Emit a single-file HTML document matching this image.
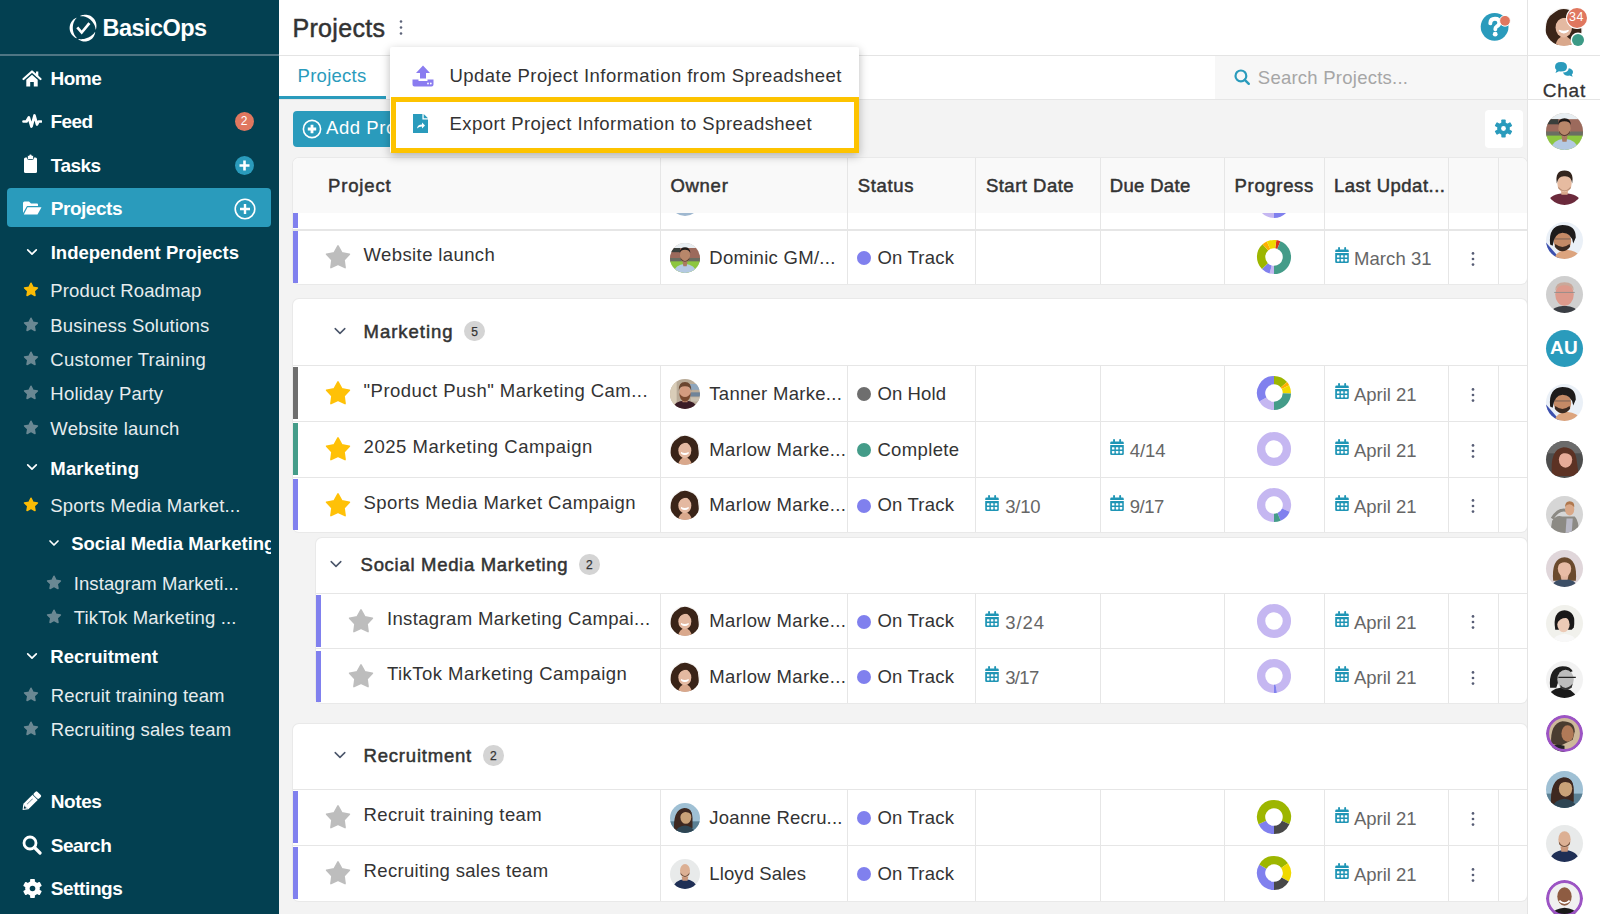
<!DOCTYPE html>
<html><head><meta charset="utf-8"><style>
html,body{margin:0;padding:0}
body{width:1600px;height:914px;overflow:hidden;position:relative;background:#f3f3f3;font-family:'Liberation Sans', sans-serif}
.t{position:absolute;white-space:nowrap;line-height:1}
svg{display:block}
</style></head><body>
<div style="position:absolute;left:0px;top:0px;width:279px;height:914px;background:#034051"></div><div style="position:absolute;left:0px;top:54px;width:279px;height:2px;background:#4f7684"></div><svg style="position:absolute;left:64px;top:8px" width="40" height="40" viewBox="0 0 40 40"><polygon points="16.27,7.85 17.23,7.44 18.23,7.12 19.27,6.88 20.34,6.74 21.43,6.70 22.53,6.76 23.63,6.94 24.71,7.22 25.76,7.61 26.77,8.11 27.73,8.71 28.62,9.41 29.43,10.19 30.16,11.06 30.80,11.99 31.33,12.98 31.76,14.01 32.09,15.07 32.30,16.15 32.42,17.23 32.42,18.31 32.33,19.38 32.15,20.42 31.88,21.42 31.53,21.38 31.43,20.39 31.25,19.42 30.99,18.49 30.68,17.59 30.30,16.73 29.88,15.92 29.41,15.14 28.90,14.40 28.35,13.70 27.77,13.04 27.16,12.41 26.52,11.82 25.85,11.27 25.14,10.75 24.41,10.27 23.64,9.83 22.84,9.42 22.00,9.07 21.13,8.76 20.23,8.51 19.30,8.32 18.34,8.20 17.36,8.15 16.36,8.19" fill="#fff"/><polygon points="31.22,24.17 31.07,25.04 30.85,25.91 30.56,26.78 30.19,27.62 29.75,28.44 29.24,29.22 28.66,29.96 28.00,30.65 27.29,31.28 26.51,31.85 25.69,32.33 24.82,32.74 23.92,33.07 22.99,33.31 22.04,33.46 21.09,33.52 20.14,33.49 19.21,33.38 18.29,33.19 17.40,32.92 16.54,32.58 15.73,32.18 14.95,31.72 14.23,31.21 14.38,30.89 15.21,31.04 16.05,31.14 16.87,31.18 17.68,31.17 18.48,31.11 19.26,31.01 20.02,30.88 20.76,30.72 21.49,30.52 22.21,30.30 22.91,30.06 23.59,29.79 24.27,29.49 24.94,29.17 25.60,28.82 26.25,28.44 26.90,28.03 27.53,27.59 28.15,27.10 28.75,26.58 29.33,26.01 29.89,25.40 30.41,24.75 30.89,24.05" fill="#fff"/><polygon points="12.71,30.36 11.76,29.92 10.85,29.39 9.98,28.78 9.16,28.08 8.40,27.30 7.71,26.44 7.10,25.51 6.59,24.51 6.18,23.47 5.87,22.38 5.68,21.27 5.60,20.14 5.64,19.01 5.79,17.89 6.06,16.80 6.44,15.74 6.92,14.73 7.49,13.78 8.14,12.90 8.88,12.09 9.67,11.36 10.52,10.71 11.42,10.15 12.34,9.68 12.55,9.97 11.88,10.71 11.28,11.49 10.76,12.30 10.31,13.14 9.92,13.99 9.59,14.85 9.33,15.72 9.12,16.59 8.97,17.47 8.86,18.34 8.81,19.21 8.80,20.09 8.84,20.96 8.93,21.83 9.06,22.70 9.24,23.57 9.48,24.43 9.78,25.29 10.13,26.14 10.55,26.98 11.03,27.80 11.58,28.59 12.20,29.35 12.90,30.07" fill="#fff"/><polyline points="13.3,19.3 17.7,24.5 25.4,15.1" fill="none" stroke="#fff" stroke-width="2.7" stroke-linecap="butt" stroke-linejoin="miter"/></svg><div class="t" style="left:102.60px;top:16.51px;font-size:23.5px;font-weight:700;color:#fff;letter-spacing:-0.572px;">BasicOps</div><svg style="position:absolute;left:22px;top:68.5px" width="20" height="19" viewBox="0 0 20 19"><path d="M1.5 10 L10 2.5 L18.5 10" fill="none" stroke="#fff" stroke-width="2.2" stroke-linecap="round" stroke-linejoin="round"/><rect x="14" y="2.5" width="2.3" height="5" fill="#fff"/><path d="M4.3 10.8 L10 5.8 L15.7 10.8 V17.5 H11.8 V13 H8.2 V17.5 H4.3 Z" fill="#fff"/></svg><div class="t" style="left:50.50px;top:69.22px;font-size:19px;font-weight:700;color:#fff;letter-spacing:-0.494px;">Home</div><svg style="position:absolute;left:22px;top:112px" width="20" height="18" viewBox="0 0 20 18"><polyline points="1.5,9.5 4.5,9.5 6.8,5.5 9.5,14.5 12.5,3.5 15,12.5 16.5,9.5 19,9.5" fill="none" stroke="#fff" stroke-width="2.7" stroke-linejoin="round" stroke-linecap="round"/></svg><div class="t" style="left:50.50px;top:112.42px;font-size:19px;font-weight:700;color:#fff;letter-spacing:-0.615px;">Feed</div><div style="position:absolute;left:234.5px;top:111.5px;width:19px;height:19px;background:#e0775f;border-radius:50%"></div><div class="t" style="left:234.5px;top:114px;width:19px;text-align:center;font-size:12px;color:#fff;line-height:14px">2</div><svg style="position:absolute;left:22px;top:154px" width="18" height="20" viewBox="0 0 18 20"><rect x="2" y="3.5" width="13" height="15.5" rx="1.5" fill="#fff"/><rect x="5.5" y="1.5" width="6" height="4" rx="1" fill="#fff" stroke="#033f52" stroke-width="0.8"/><circle cx="8.5" cy="1.8" r="1.2" fill="#fff"/></svg><div class="t" style="left:50.75px;top:156.02px;font-size:19px;font-weight:700;color:#fff;letter-spacing:-0.515px;">Tasks</div><div style="position:absolute;left:235px;top:156px;width:19px;height:19px;background:#2a9bbc;border-radius:50%"></div><svg style="position:absolute;left:235px;top:156px" width="19" height="19" viewBox="0 0 19 19"><path d="M9.5 4.5 V14.5 M4.5 9.5 H14.5" stroke="#fff" stroke-width="2.6"/></svg><div style="position:absolute;left:7px;top:188px;width:264px;height:39px;background:#2a9bbc;border-radius:4px"></div><svg style="position:absolute;left:22px;top:200px" width="20" height="16" viewBox="0 0 20 16"><path d="M1 3 Q1 1.5 2.5 1.5 H7 L9 3.5 H15 Q16 3.5 16 4.5 V6 H5 L1 13 Z" fill="#fff"/><path d="M5.5 7.2 H19.5 L15.5 14.5 H1.8 Z" fill="#fff"/></svg><div class="t" style="left:50.75px;top:199.42px;font-size:19px;font-weight:700;color:#fff;letter-spacing:-0.461px;">Projects</div><svg style="position:absolute;left:234px;top:198px" width="22" height="22" viewBox="0 0 22 22"><circle cx="11" cy="11" r="9.8" fill="none" stroke="#fff" stroke-width="1.6"/><path d="M11 6 V16 M6 11 H16" stroke="#fff" stroke-width="2.4"/></svg><svg style="position:absolute;left:24.5px;top:244.5px" width="14" height="14" viewBox="0 0 14 14"><polyline points="2.7,4.85 7,9.15 11.3,4.85" fill="none" stroke="#fff" stroke-width="1.7" stroke-linecap="round" stroke-linejoin="round"/></svg><div class="t" style="left:50.70px;top:243.64px;font-size:18.5px;font-weight:700;color:#fff;letter-spacing:0.009px;">Independent Projects</div><svg style="position:absolute;left:22.3px;top:281.09999999999997px" width="18" height="18" viewBox="0 0 18 18"><polygon points="9.00,2.30 10.97,6.29 15.37,6.93 12.19,10.04 12.94,14.42 9.00,12.35 5.06,14.42 5.81,10.04 2.63,6.93 7.03,6.29" fill="#fbbc05" stroke="#fbbc05" stroke-width="1.6" stroke-linejoin="round"/></svg><div class="t" style="left:50.30px;top:282.34px;font-size:18.5px;font-weight:400;color:#e6ecee;letter-spacing:0.135px;">Product Roadmap</div><svg style="position:absolute;left:22.3px;top:315.5px" width="18" height="18" viewBox="0 0 18 18"><polygon points="9.00,2.30 10.97,6.29 15.37,6.93 12.19,10.04 12.94,14.42 9.00,12.35 5.06,14.42 5.81,10.04 2.63,6.93 7.03,6.29" fill="#6a8893" stroke="#6a8893" stroke-width="1.6" stroke-linejoin="round"/></svg><div class="t" style="left:50.30px;top:316.74px;font-size:18.5px;font-weight:400;color:#e6ecee;letter-spacing:0.158px;">Business Solutions</div><svg style="position:absolute;left:22.3px;top:350.2px" width="18" height="18" viewBox="0 0 18 18"><polygon points="9.00,2.30 10.97,6.29 15.37,6.93 12.19,10.04 12.94,14.42 9.00,12.35 5.06,14.42 5.81,10.04 2.63,6.93 7.03,6.29" fill="#6a8893" stroke="#6a8893" stroke-width="1.6" stroke-linejoin="round"/></svg><div class="t" style="left:50.30px;top:351.44px;font-size:18.5px;font-weight:400;color:#e6ecee;letter-spacing:0.272px;">Customer Training</div><svg style="position:absolute;left:22.3px;top:384.2px" width="18" height="18" viewBox="0 0 18 18"><polygon points="9.00,2.30 10.97,6.29 15.37,6.93 12.19,10.04 12.94,14.42 9.00,12.35 5.06,14.42 5.81,10.04 2.63,6.93 7.03,6.29" fill="#6a8893" stroke="#6a8893" stroke-width="1.6" stroke-linejoin="round"/></svg><div class="t" style="left:50.30px;top:385.44px;font-size:18.5px;font-weight:400;color:#e6ecee;letter-spacing:0.223px;">Holiday Party</div><svg style="position:absolute;left:22.3px;top:418.7px" width="18" height="18" viewBox="0 0 18 18"><polygon points="9.00,2.30 10.97,6.29 15.37,6.93 12.19,10.04 12.94,14.42 9.00,12.35 5.06,14.42 5.81,10.04 2.63,6.93 7.03,6.29" fill="#6a8893" stroke="#6a8893" stroke-width="1.6" stroke-linejoin="round"/></svg><div class="t" style="left:50.30px;top:419.94px;font-size:18.5px;font-weight:400;color:#e6ecee;letter-spacing:0.227px;">Website launch</div><svg style="position:absolute;left:24.5px;top:460.4px" width="14" height="14" viewBox="0 0 14 14"><polyline points="2.7,4.85 7,9.15 11.3,4.85" fill="none" stroke="#fff" stroke-width="1.7" stroke-linecap="round" stroke-linejoin="round"/></svg><div class="t" style="left:50.30px;top:459.54px;font-size:18.5px;font-weight:700;color:#fff;letter-spacing:0.178px;">Marketing</div><svg style="position:absolute;left:22.3px;top:496.0px" width="18" height="18" viewBox="0 0 18 18"><polygon points="9.00,2.30 10.97,6.29 15.37,6.93 12.19,10.04 12.94,14.42 9.00,12.35 5.06,14.42 5.81,10.04 2.63,6.93 7.03,6.29" fill="#fbbc05" stroke="#fbbc05" stroke-width="1.6" stroke-linejoin="round"/></svg><div class="t" style="left:50.30px;top:497.24px;font-size:18.5px;font-weight:400;color:#e6ecee;letter-spacing:0.186px;">Sports Media Market...</div><div style="position:absolute;left:0;top:530px;width:271px;height:30px;overflow:hidden"><svg style="position:absolute;left:47px;top:5.600000000000023px" width="14" height="14" viewBox="0 0 14 14"><polyline points="3.0,5.0 7,9.0 11.0,5.0" fill="none" stroke="#fff" stroke-width="1.7" stroke-linecap="round" stroke-linejoin="round"/></svg><div class="t" style="left:71.2px;top:4.94px;font-size:18.5px;font-weight:700;color:#fff;letter-spacing:-0.02px">Social Media Marketing</div></div><svg style="position:absolute;left:45.2px;top:574.0px" width="18" height="18" viewBox="0 0 18 18"><polygon points="9.00,2.30 10.97,6.29 15.37,6.93 12.19,10.04 12.94,14.42 9.00,12.35 5.06,14.42 5.81,10.04 2.63,6.93 7.03,6.29" fill="#6a8893" stroke="#6a8893" stroke-width="1.6" stroke-linejoin="round"/></svg><div class="t" style="left:73.70px;top:575.24px;font-size:18.5px;font-weight:400;color:#e6ecee;letter-spacing:0.097px;">Instagram Marketi...</div><svg style="position:absolute;left:45.2px;top:608.0px" width="18" height="18" viewBox="0 0 18 18"><polygon points="9.00,2.30 10.97,6.29 15.37,6.93 12.19,10.04 12.94,14.42 9.00,12.35 5.06,14.42 5.81,10.04 2.63,6.93 7.03,6.29" fill="#6a8893" stroke="#6a8893" stroke-width="1.6" stroke-linejoin="round"/></svg><div class="t" style="left:73.70px;top:609.24px;font-size:18.5px;font-weight:400;color:#e6ecee;letter-spacing:0.164px;">TikTok Marketing ...</div><svg style="position:absolute;left:24.5px;top:649.1px" width="14" height="14" viewBox="0 0 14 14"><polyline points="2.7,4.85 7,9.15 11.3,4.85" fill="none" stroke="#fff" stroke-width="1.7" stroke-linecap="round" stroke-linejoin="round"/></svg><div class="t" style="left:50.30px;top:648.24px;font-size:18.5px;font-weight:700;color:#fff;letter-spacing:-0.025px;">Recruitment</div><svg style="position:absolute;left:22.3px;top:686.1999999999999px" width="18" height="18" viewBox="0 0 18 18"><polygon points="9.00,2.30 10.97,6.29 15.37,6.93 12.19,10.04 12.94,14.42 9.00,12.35 5.06,14.42 5.81,10.04 2.63,6.93 7.03,6.29" fill="#6a8893" stroke="#6a8893" stroke-width="1.6" stroke-linejoin="round"/></svg><div class="t" style="left:50.70px;top:687.44px;font-size:18.5px;font-weight:400;color:#e6ecee;letter-spacing:0.156px;">Recruit training team</div><svg style="position:absolute;left:22.3px;top:720.1999999999999px" width="18" height="18" viewBox="0 0 18 18"><polygon points="9.00,2.30 10.97,6.29 15.37,6.93 12.19,10.04 12.94,14.42 9.00,12.35 5.06,14.42 5.81,10.04 2.63,6.93 7.03,6.29" fill="#6a8893" stroke="#6a8893" stroke-width="1.6" stroke-linejoin="round"/></svg><div class="t" style="left:50.70px;top:721.44px;font-size:18.5px;font-weight:400;color:#e6ecee;letter-spacing:0.126px;">Recruiting sales team</div><svg style="position:absolute;left:18px;top:788px" width="30" height="30" viewBox="0 0 30 30"><g transform="translate(4.6,21.9) rotate(-45)"><polygon points="0,0 4.6,-3.7 4.6,3.7" fill="#fff"/><polygon points="1.6,0 3.9,-1.7 3.9,1.7" fill="#033040"/><rect x="4.5" y="-3.7" width="13.2" height="7.4" fill="#fff"/><rect x="7" y="-1.2" width="8" height="0.7" fill="#6a8893"/><rect x="17.7" y="-3.7" width="0.8" height="7.4" fill="#4a7080"/><rect x="18.4" y="-3.7" width="4.9" height="7.4" rx="1.3" fill="#fff"/></g></svg><div class="t" style="left:50.70px;top:791.72px;font-size:19px;font-weight:700;color:#fff;letter-spacing:-0.395px;">Notes</div><svg style="position:absolute;left:22px;top:835px" width="20" height="20" viewBox="0 0 20 20"><circle cx="8" cy="8" r="6" fill="none" stroke="#fff" stroke-width="2.8"/><path d="M12.5 12.5 L18 18" stroke="#fff" stroke-width="3.2" stroke-linecap="round"/></svg><div class="t" style="left:50.70px;top:835.52px;font-size:19px;font-weight:700;color:#fff;letter-spacing:-0.453px;">Search</div><svg style="position:absolute;left:22px;top:878px" width="21" height="21" viewBox="0 0 21 21"><circle cx="10.5" cy="10.5" r="7.3" fill="#fff"/><rect x="8.1" y="1.0" width="4.8" height="4.2" rx="0.8" fill="#fff" transform="rotate(0.0 10.5 10.5)"/><rect x="8.1" y="1.0" width="4.8" height="4.2" rx="0.8" fill="#fff" transform="rotate(60.0 10.5 10.5)"/><rect x="8.1" y="1.0" width="4.8" height="4.2" rx="0.8" fill="#fff" transform="rotate(120.0 10.5 10.5)"/><rect x="8.1" y="1.0" width="4.8" height="4.2" rx="0.8" fill="#fff" transform="rotate(180.0 10.5 10.5)"/><rect x="8.1" y="1.0" width="4.8" height="4.2" rx="0.8" fill="#fff" transform="rotate(240.0 10.5 10.5)"/><rect x="8.1" y="1.0" width="4.8" height="4.2" rx="0.8" fill="#fff" transform="rotate(300.0 10.5 10.5)"/><circle cx="10.5" cy="10.5" r="2.8" fill="#034051"/></svg><div class="t" style="left:50.70px;top:879.02px;font-size:19px;font-weight:700;color:#fff;letter-spacing:-0.394px;">Settings</div><div style="position:absolute;left:279px;top:0px;width:1248px;height:55px;background:#fff"></div><div style="position:absolute;left:279px;top:55px;width:1248px;height:1px;background:#e4e4e4"></div><div class="t" style="left:292.40px;top:15.54px;font-size:25px;font-weight:400;color:#333;letter-spacing:0.329px;-webkit-text-stroke:0.5px #333;">Projects</div><svg style="position:absolute;left:397px;top:19px" width="8" height="17" viewBox="0 0 8 17"><circle cx="4" cy="2.5" r="1.3" fill="#5d6379"/><circle cx="4" cy="8.5" r="1.3" fill="#5d6379"/><circle cx="4" cy="14.5" r="1.3" fill="#5d6379"/></svg><svg style="position:absolute;left:1479px;top:11px" width="32" height="32" viewBox="0 0 32 32"><circle cx="15.6" cy="15.8" r="13.9" fill="#2a9bbc"/><path d="M11.3 12.3 Q11.5 7.8 16 7.8 Q20.3 7.8 20.3 11.8 Q20.3 14.3 17.6 15.6 Q16.3 16.3 16.3 18.3" fill="none" stroke="#fff" stroke-width="3.9" stroke-linecap="round"/><circle cx="16.2" cy="23.2" r="2.4" fill="#fff"/><circle cx="26" cy="9.8" r="5.4" fill="#e0775f" stroke="#fff" stroke-width="1"/></svg><div style="position:absolute;left:279px;top:56px;width:1248px;height:44px;background:#fff"></div><div style="position:absolute;left:279px;top:99px;width:1248px;height:1.5px;background:#e6e6e6"></div><div class="t" style="left:297.60px;top:66.84px;font-size:18.5px;font-weight:400;color:#2a9bbc;letter-spacing:0.254px;">Projects</div><div style="position:absolute;left:279px;top:96px;width:107px;height:3px;background:#2a9bbc"></div><div style="position:absolute;left:1215px;top:56px;width:312px;height:43px;background:#f7f7f7"></div><svg style="position:absolute;left:1233px;top:68px" width="20" height="20" viewBox="0 0 20 20"><circle cx="7.9" cy="7.9" r="5.4" fill="none" stroke="#2a9bbc" stroke-width="2.2"/><path d="M11.8 11.8 L15.8 15.8" stroke="#2a9bbc" stroke-width="2.4" stroke-linecap="round"/></svg><div class="t" style="left:1257.80px;top:68.94px;font-size:18.5px;font-weight:400;color:#a6a6a6;letter-spacing:0.247px;">Search Projects...</div><div style="position:absolute;left:279px;top:100px;width:1248px;height:814px;background:#f3f3f3"></div><div style="position:absolute;left:292.5px;top:110.5px;width:110px;height:36px;background:#2a9bbc;border-radius:4px"></div><svg style="position:absolute;left:301px;top:118px" width="22" height="22" viewBox="0 0 22 22"><circle cx="11" cy="11" r="8.6" fill="none" stroke="#fff" stroke-width="1.6"/><path d="M11 6.8 V15.2 M6.8 11 H15.2" stroke="#fff" stroke-width="2.8"/></svg><div class="t" style="left:326.00px;top:119.34px;font-size:18.5px;font-weight:400;color:#fff;letter-spacing:0.574px;">Add Project</div><div style="position:absolute;left:1484.5px;top:110px;width:38px;height:38px;background:#fff;border-radius:4px"></div><svg style="position:absolute;left:1492.5px;top:117.7px" width="21" height="21" viewBox="0 0 21 21"><circle cx="10.5" cy="10.5" r="6.3" fill="#2a9bbc"/><rect x="8.3" y="1.5" width="4.4" height="4.7" rx="0.8" fill="#2a9bbc" transform="rotate(0.0 10.5 10.5)"/><rect x="8.3" y="1.5" width="4.4" height="4.7" rx="0.8" fill="#2a9bbc" transform="rotate(60.0 10.5 10.5)"/><rect x="8.3" y="1.5" width="4.4" height="4.7" rx="0.8" fill="#2a9bbc" transform="rotate(120.0 10.5 10.5)"/><rect x="8.3" y="1.5" width="4.4" height="4.7" rx="0.8" fill="#2a9bbc" transform="rotate(180.0 10.5 10.5)"/><rect x="8.3" y="1.5" width="4.4" height="4.7" rx="0.8" fill="#2a9bbc" transform="rotate(240.0 10.5 10.5)"/><rect x="8.3" y="1.5" width="4.4" height="4.7" rx="0.8" fill="#2a9bbc" transform="rotate(300.0 10.5 10.5)"/><circle cx="10.5" cy="10.5" r="2.4" fill="#fff"/></svg><div style="position:absolute;left:292.5px;top:157.5px;width:1234.5px;height:126.5px;background:#fff;border-radius:6px;box-shadow:0 0 0 1px #e9e9e9"></div><div style="position:absolute;left:292.5px;top:157.5px;width:1234.5px;height:55px;background:#f9f9f9;border-radius:6px 6px 0 0"></div><div style="position:absolute;left:659.5px;top:157.5px;width:1px;height:126.5px;background:#e6e6e6"></div><div style="position:absolute;left:847px;top:157.5px;width:1px;height:126.5px;background:#e6e6e6"></div><div style="position:absolute;left:975px;top:157.5px;width:1px;height:126.5px;background:#e6e6e6"></div><div style="position:absolute;left:1099.5px;top:157.5px;width:1px;height:126.5px;background:#e6e6e6"></div><div style="position:absolute;left:1224px;top:157.5px;width:1px;height:126.5px;background:#e6e6e6"></div><div style="position:absolute;left:1323.5px;top:157.5px;width:1px;height:126.5px;background:#e6e6e6"></div><div style="position:absolute;left:1447.7px;top:157.5px;width:1px;height:126.5px;background:#e6e6e6"></div><div style="position:absolute;left:1498px;top:157.5px;width:1px;height:126.5px;background:#e6e6e6"></div><div style="position:absolute;left:292.5px;top:229px;width:1234.5px;height:1.5px;background:#e6e6e6"></div><div style="position:absolute;left:0;top:212.5px;width:1527px;height:16.5px;overflow:hidden"><svg style="position:absolute;left:1254px;top:-31.5px" width="40" height="40" viewBox="0 0 40 40"><path d="M20.00,7.10 A12.9,12.9 0 0 1 20.00,32.90" fill="none" stroke="#8080ee" stroke-width="8.3"/><path d="M20.00,32.90 A12.9,12.9 0 0 1 20.00,7.10" fill="none" stroke="#c5b7f1" stroke-width="8.3"/></svg><div style="position:absolute;left:669.5px;top:-26.5px;width:30px;height:30px;border-radius:50%;background:#9fb8d0"></div></div><div class="t" style="left:328.00px;top:177.34px;font-size:18.5px;font-weight:400;color:#333;letter-spacing:0.838px;-webkit-text-stroke:0.5px #333;">Project</div><div class="t" style="left:670.40px;top:177.34px;font-size:18.5px;font-weight:400;color:#333;letter-spacing:0.729px;-webkit-text-stroke:0.5px #333;">Owner</div><div class="t" style="left:857.80px;top:177.34px;font-size:18.5px;font-weight:400;color:#333;letter-spacing:0.631px;-webkit-text-stroke:0.5px #333;">Status</div><div class="t" style="left:985.90px;top:177.34px;font-size:18.5px;font-weight:400;color:#333;letter-spacing:0.490px;-webkit-text-stroke:0.5px #333;">Start Date</div><div class="t" style="left:1109.80px;top:177.34px;font-size:18.5px;font-weight:400;color:#333;letter-spacing:0.320px;-webkit-text-stroke:0.5px #333;">Due Date</div><div class="t" style="left:1234.60px;top:177.34px;font-size:18.5px;font-weight:400;color:#333;letter-spacing:0.666px;-webkit-text-stroke:0.5px #333;">Progress</div><div class="t" style="left:1334.00px;top:177.34px;font-size:18.5px;font-weight:400;color:#333;letter-spacing:0.509px;-webkit-text-stroke:0.5px #333;">Last Updat...</div><div style="position:absolute;left:292.5px;top:212.5px;width:5.5px;height:15px;background:#8080ee"></div><div style="position:absolute;left:292.5px;top:231.0px;width:5.5px;height:52.0px;background:#8080ee"></div><svg style="position:absolute;left:324px;top:243.0px" width="28" height="28" viewBox="0 0 28 28"><polygon points="14.00,2.90 17.74,9.75 25.41,11.19 20.05,16.87 21.05,24.61 14.00,21.26 6.95,24.61 7.95,16.87 2.59,11.19 10.26,9.75" fill="#bdbdbd" stroke="#bdbdbd" stroke-width="1.6" stroke-linejoin="round"/></svg><div class="t" style="left:363.60px;top:246.34px;font-size:18.5px;font-weight:400;color:#333;letter-spacing:0.388px;">Website launch</div><div style="position:absolute;left:669.5px;top:242.5px;width:30px;height:30px;border-radius:50%;overflow:hidden;background:#c9b6a8"><svg width="100%" height="100%" viewBox="0 0 36 36"><rect x="0" y="0" width="36" height="36" fill="#e8eef2"/><rect x="0" y="6" width="36" height="16" fill="#9c6a5c"/><rect x="0" y="6" width="12" height="5" fill="#3a3f3c"/><rect x="0" y="18" width="36" height="5" fill="#6a6e62"/><rect x="0" y="22" width="36" height="14" fill="#8dc63f"/><path d="M4 36 Q6 26 18 25 Q30 26 32 36Z" fill="#b4c9e2"/><path d="M15 22 L21 22 L20 28 L16 28Z" fill="#a87a60"/><ellipse cx="18" cy="15" rx="6" ry="8" fill="#b8876a"/><path d="M11.5 12 Q12 5 18 5 Q24 5 24.5 12 Q23 8 18 8 Q13 8 11.5 12Z" fill="#1e1a18"/><path d="M12.5 17 Q18 26 23.5 17 L23 20 Q18 25 13 20Z" fill="#5a4034"/></svg></div><div class="t" style="left:709.30px;top:248.54px;font-size:18.5px;font-weight:400;color:#333;letter-spacing:0.283px;">Dominic GM/...</div><div style="position:absolute;left:857px;top:251.0px;width:14px;height:14px;background:#8080ee;border-radius:50%"></div><div class="t" style="left:877.40px;top:248.54px;font-size:18.5px;font-weight:400;color:#333;letter-spacing:0.215px;">On Track</div><svg style="position:absolute;left:1254px;top:237.0px" width="40" height="40" viewBox="0 0 40 40"><path d="M21.80,7.23 A12.9,12.9 0 0 1 24.83,8.04" fill="none" stroke="#d8321c" stroke-width="8.3"/><path d="M24.83,8.04 A12.9,12.9 0 0 1 20.00,32.90" fill="none" stroke="#449c89" stroke-width="8.3"/><path d="M20.00,32.90 A12.9,12.9 0 0 1 16.66,32.46" fill="none" stroke="#c5b7f1" stroke-width="8.3"/><path d="M16.66,32.46 A12.9,12.9 0 0 1 10.88,29.12" fill="none" stroke="#8080ee" stroke-width="8.3"/><path d="M10.88,29.12 A12.9,12.9 0 0 1 11.37,10.41" fill="none" stroke="#9db600" stroke-width="8.3"/><path d="M11.37,10.41 A12.9,12.9 0 0 1 14.55,8.31" fill="none" stroke="#ffb000" stroke-width="8.3"/><path d="M14.55,8.31 A12.9,12.9 0 0 1 21.80,7.23" fill="none" stroke="#f0d900" stroke-width="8.3"/></svg><svg style="position:absolute;left:1334.6px;top:247.0px" width="15" height="17" viewBox="0 0 15 17"><rect x="3.1" y="0" width="1.9" height="3.2" rx="0.9" fill="#1f95b5"/><rect x="9.2" y="0" width="1.9" height="3.2" rx="0.9" fill="#1f95b5"/><path d="M0.2 4.9 V3.9 Q0.2 2.5 1.6 2.5 H12.4 Q13.8 2.5 13.8 3.9 V4.9 Z" fill="#1f95b5"/><path d="M0.2 6 H13.8 V14.8 Q13.8 16.1 12.5 16.1 H1.5 Q0.2 16.1 0.2 14.8 Z" fill="#1f95b5"/><rect x="1.9500000000000002" y="8.200000000000001" width="2.5" height="2.4" rx="0.4" fill="#fff"/><rect x="1.9500000000000002" y="12.0" width="2.5" height="2.4" rx="0.4" fill="#fff"/><rect x="5.85" y="8.200000000000001" width="2.5" height="2.4" rx="0.4" fill="#fff"/><rect x="5.85" y="12.0" width="2.5" height="2.4" rx="0.4" fill="#fff"/><rect x="9.75" y="8.200000000000001" width="2.5" height="2.4" rx="0.4" fill="#fff"/><rect x="9.75" y="12.0" width="2.5" height="2.4" rx="0.4" fill="#fff"/></svg><div class="t" style="left:1354.00px;top:250.14px;font-size:18.5px;font-weight:400;color:#666;letter-spacing:0.070px;">March 31</div><svg style="position:absolute;left:1470px;top:250.5px" width="6" height="16" viewBox="0 0 6 16"><circle cx="3" cy="2.4" r="1.35" fill="#575d75"/><circle cx="3" cy="8" r="1.35" fill="#575d75"/><circle cx="3" cy="13.6" r="1.35" fill="#575d75"/></svg><div style="position:absolute;left:292.5px;top:298.5px;width:1234.5px;height:233.0px;background:#fff;border-radius:6px;box-shadow:0 0 0 1px #e9e9e9"></div><div style="position:absolute;left:292.5px;top:365px;width:1234.5px;height:1.2px;background:#e6e6e6"></div><svg style="position:absolute;left:332.5px;top:323.75px" width="14" height="14" viewBox="0 0 14 14"><polyline points="2.2,4.6 7,9.4 11.8,4.6" fill="none" stroke="#4a556a" stroke-width="1.5" stroke-linecap="round" stroke-linejoin="round"/></svg><div class="t" style="left:363.60px;top:322.69px;font-size:18.5px;font-weight:400;color:#333;letter-spacing:0.971px;-webkit-text-stroke:0.5px #333;">Marketing</div><div style="position:absolute;left:464.35px;top:320.75px;width:20.5px;height:20.5px;background:#d4d4d4;border-radius:50%"></div><div class="t" style="left:464.6px;top:324.55px;width:20px;text-align:center;font-size:12px;color:#333;line-height:14px;-webkit-text-stroke:0.25px #333">5</div><div style="position:absolute;left:659.5px;top:366px;width:1px;height:165.5px;background:#e6e6e6"></div><div style="position:absolute;left:847px;top:366px;width:1px;height:165.5px;background:#e6e6e6"></div><div style="position:absolute;left:975px;top:366px;width:1px;height:165.5px;background:#e6e6e6"></div><div style="position:absolute;left:1099.5px;top:366px;width:1px;height:165.5px;background:#e6e6e6"></div><div style="position:absolute;left:1224px;top:366px;width:1px;height:165.5px;background:#e6e6e6"></div><div style="position:absolute;left:1323.5px;top:366px;width:1px;height:165.5px;background:#e6e6e6"></div><div style="position:absolute;left:1447.7px;top:366px;width:1px;height:165.5px;background:#e6e6e6"></div><div style="position:absolute;left:1498px;top:366px;width:1px;height:165.5px;background:#e6e6e6"></div><div style="position:absolute;left:292.5px;top:420.5px;width:1234.5px;height:1.5px;background:#e6e6e6"></div><div style="position:absolute;left:292.5px;top:476.5px;width:1234.5px;height:1.5px;background:#e6e6e6"></div><div style="position:absolute;left:292.5px;top:367.0px;width:5.5px;height:52.0px;background:#6e6e6e"></div><svg style="position:absolute;left:324px;top:379.0px" width="28" height="28" viewBox="0 0 28 28"><polygon points="14.00,2.90 17.74,9.75 25.41,11.19 20.05,16.87 21.05,24.61 14.00,21.26 6.95,24.61 7.95,16.87 2.59,11.19 10.26,9.75" fill="#ffc107" stroke="#ffc107" stroke-width="1.6" stroke-linejoin="round"/></svg><div class="t" style="left:363.60px;top:382.34px;font-size:18.5px;font-weight:400;color:#333;letter-spacing:0.460px;">&quot;Product Push&quot; Marketing Cam...</div><div style="position:absolute;left:669.5px;top:378.5px;width:30px;height:30px;border-radius:50%;overflow:hidden;background:#b9ab98"><svg width="100%" height="100%" viewBox="0 0 36 36"><rect x="0" y="0" width="8" height="36" fill="#d9cdb8"/><rect x="24" y="6" width="12" height="7" fill="#8ea6bd"/><rect x="24" y="16" width="12" height="5" fill="#6f8499"/><rect x="25" y="22" width="11" height="5" fill="#c9c0b0"/><path d="M3 36 Q5 26 18 26 Q31 26 33 36Z" fill="#3a1c26"/><path d="M14 22 L22 22 L21 28 L15 28Z" fill="#b98268"/><ellipse cx="18" cy="16.5" rx="6.8" ry="8.8" fill="#d49c80"/><path d="M10.5 14 Q10 3.5 18 3.5 Q26 3.5 25.5 14 Q24 8.5 18 8.8 Q12 8.5 10.5 14Z" fill="#6a4630"/><path d="M11.2 16.5 Q11.3 26.5 18 27 Q24.7 26.5 24.8 16.5 Q23 21.5 18 21.5 Q13 21.5 11.2 16.5Z" fill="#7a4a30"/></svg></div><div class="t" style="left:709.30px;top:384.54px;font-size:18.5px;font-weight:400;color:#333;letter-spacing:0.284px;">Tanner Marke...</div><div style="position:absolute;left:857px;top:387.0px;width:14px;height:14px;background:#6e6e6e;border-radius:50%"></div><div class="t" style="left:877.40px;top:384.54px;font-size:18.5px;font-weight:400;color:#333;letter-spacing:0.124px;">On Hold</div><svg style="position:absolute;left:1254px;top:373.0px" width="40" height="40" viewBox="0 0 40 40"><path d="M20.00,7.10 A12.9,12.9 0 0 1 29.88,11.71" fill="none" stroke="#9db600" stroke-width="8.3"/><path d="M29.88,11.71 A12.9,12.9 0 0 1 31.49,14.14" fill="none" stroke="#ffb000" stroke-width="8.3"/><path d="M31.49,14.14 A12.9,12.9 0 0 1 32.89,20.45" fill="none" stroke="#f0d900" stroke-width="8.3"/><path d="M32.89,20.45 A12.9,12.9 0 0 1 20.00,32.90" fill="none" stroke="#449c89" stroke-width="8.3"/><path d="M20.00,32.90 A12.9,12.9 0 0 1 8.83,26.45" fill="none" stroke="#c5b7f1" stroke-width="8.3"/><path d="M8.83,26.45 A12.9,12.9 0 0 1 20.00,7.10" fill="none" stroke="#8080ee" stroke-width="8.3"/></svg><svg style="position:absolute;left:1334.6px;top:383.0px" width="15" height="17" viewBox="0 0 15 17"><rect x="3.1" y="0" width="1.9" height="3.2" rx="0.9" fill="#1f95b5"/><rect x="9.2" y="0" width="1.9" height="3.2" rx="0.9" fill="#1f95b5"/><path d="M0.2 4.9 V3.9 Q0.2 2.5 1.6 2.5 H12.4 Q13.8 2.5 13.8 3.9 V4.9 Z" fill="#1f95b5"/><path d="M0.2 6 H13.8 V14.8 Q13.8 16.1 12.5 16.1 H1.5 Q0.2 16.1 0.2 14.8 Z" fill="#1f95b5"/><rect x="1.9500000000000002" y="8.200000000000001" width="2.5" height="2.4" rx="0.4" fill="#fff"/><rect x="1.9500000000000002" y="12.0" width="2.5" height="2.4" rx="0.4" fill="#fff"/><rect x="5.85" y="8.200000000000001" width="2.5" height="2.4" rx="0.4" fill="#fff"/><rect x="5.85" y="12.0" width="2.5" height="2.4" rx="0.4" fill="#fff"/><rect x="9.75" y="8.200000000000001" width="2.5" height="2.4" rx="0.4" fill="#fff"/><rect x="9.75" y="12.0" width="2.5" height="2.4" rx="0.4" fill="#fff"/></svg><div class="t" style="left:1354.00px;top:386.14px;font-size:18.5px;font-weight:400;color:#666;letter-spacing:-0.019px;">April 21</div><svg style="position:absolute;left:1470px;top:386.5px" width="6" height="16" viewBox="0 0 6 16"><circle cx="3" cy="2.4" r="1.35" fill="#575d75"/><circle cx="3" cy="8" r="1.35" fill="#575d75"/><circle cx="3" cy="13.6" r="1.35" fill="#575d75"/></svg><div style="position:absolute;left:292.5px;top:423.0px;width:5.5px;height:52.0px;background:#449c89"></div><svg style="position:absolute;left:324px;top:435.0px" width="28" height="28" viewBox="0 0 28 28"><polygon points="14.00,2.90 17.74,9.75 25.41,11.19 20.05,16.87 21.05,24.61 14.00,21.26 6.95,24.61 7.95,16.87 2.59,11.19 10.26,9.75" fill="#ffc107" stroke="#ffc107" stroke-width="1.6" stroke-linejoin="round"/></svg><div class="t" style="left:363.60px;top:438.34px;font-size:18.5px;font-weight:400;color:#333;letter-spacing:0.532px;">2025 Marketing Campaign</div><div style="position:absolute;left:669.5px;top:434.5px;width:30px;height:30px;border-radius:50%;overflow:hidden;background:#f4f2f0"><svg width="100%" height="100%" viewBox="0 0 36 36"><path d="M1 27 Q-1 10 8 5 Q15 -1 23 2 Q34 5 34 17 Q36 28 30 33 L24 35 L12 35 L4 33Z" fill="#3a2418"/><path d="M10 36 Q11 27 18 27 Q25 27 26 36Z" fill="#d9a88c"/><ellipse cx="17.8" cy="18.5" rx="7.8" ry="9.4" fill="#e4b9a1"/><path d="M9.5 13 Q17 4.5 26.5 12 Q22 8.5 17 9.5 Q12 10.5 9.5 16Z" fill="#3a2418"/><path d="M13.3 21.3 Q17.8 25.5 22.3 21.3 Q17.8 23 13.3 21.3Z" fill="#fff" stroke="#fff" stroke-width="1.3"/></svg></div><div class="t" style="left:709.30px;top:440.54px;font-size:18.5px;font-weight:400;color:#333;letter-spacing:0.359px;">Marlow Marke...</div><div style="position:absolute;left:857px;top:443.0px;width:14px;height:14px;background:#449c89;border-radius:50%"></div><div class="t" style="left:877.40px;top:440.54px;font-size:18.5px;font-weight:400;color:#333;letter-spacing:0.360px;">Complete</div><svg style="position:absolute;left:1110.2px;top:439.0px" width="15" height="17" viewBox="0 0 15 17"><rect x="3.1" y="0" width="1.9" height="3.2" rx="0.9" fill="#1f95b5"/><rect x="9.2" y="0" width="1.9" height="3.2" rx="0.9" fill="#1f95b5"/><path d="M0.2 4.9 V3.9 Q0.2 2.5 1.6 2.5 H12.4 Q13.8 2.5 13.8 3.9 V4.9 Z" fill="#1f95b5"/><path d="M0.2 6 H13.8 V14.8 Q13.8 16.1 12.5 16.1 H1.5 Q0.2 16.1 0.2 14.8 Z" fill="#1f95b5"/><rect x="1.9500000000000002" y="8.200000000000001" width="2.5" height="2.4" rx="0.4" fill="#fff"/><rect x="1.9500000000000002" y="12.0" width="2.5" height="2.4" rx="0.4" fill="#fff"/><rect x="5.85" y="8.200000000000001" width="2.5" height="2.4" rx="0.4" fill="#fff"/><rect x="5.85" y="12.0" width="2.5" height="2.4" rx="0.4" fill="#fff"/><rect x="9.75" y="8.200000000000001" width="2.5" height="2.4" rx="0.4" fill="#fff"/><rect x="9.75" y="12.0" width="2.5" height="2.4" rx="0.4" fill="#fff"/></svg><div class="t" style="left:1129.80px;top:442.14px;font-size:18.5px;font-weight:400;color:#666;letter-spacing:-0.067px;">4/14</div><svg style="position:absolute;left:1254px;top:429.0px" width="40" height="40" viewBox="0 0 40 40"><circle cx="20" cy="20" r="12.9" fill="none" stroke="#c5b7f1" stroke-width="8.3"/></svg><svg style="position:absolute;left:1334.6px;top:439.0px" width="15" height="17" viewBox="0 0 15 17"><rect x="3.1" y="0" width="1.9" height="3.2" rx="0.9" fill="#1f95b5"/><rect x="9.2" y="0" width="1.9" height="3.2" rx="0.9" fill="#1f95b5"/><path d="M0.2 4.9 V3.9 Q0.2 2.5 1.6 2.5 H12.4 Q13.8 2.5 13.8 3.9 V4.9 Z" fill="#1f95b5"/><path d="M0.2 6 H13.8 V14.8 Q13.8 16.1 12.5 16.1 H1.5 Q0.2 16.1 0.2 14.8 Z" fill="#1f95b5"/><rect x="1.9500000000000002" y="8.200000000000001" width="2.5" height="2.4" rx="0.4" fill="#fff"/><rect x="1.9500000000000002" y="12.0" width="2.5" height="2.4" rx="0.4" fill="#fff"/><rect x="5.85" y="8.200000000000001" width="2.5" height="2.4" rx="0.4" fill="#fff"/><rect x="5.85" y="12.0" width="2.5" height="2.4" rx="0.4" fill="#fff"/><rect x="9.75" y="8.200000000000001" width="2.5" height="2.4" rx="0.4" fill="#fff"/><rect x="9.75" y="12.0" width="2.5" height="2.4" rx="0.4" fill="#fff"/></svg><div class="t" style="left:1354.00px;top:442.14px;font-size:18.5px;font-weight:400;color:#666;letter-spacing:-0.019px;">April 21</div><svg style="position:absolute;left:1470px;top:442.5px" width="6" height="16" viewBox="0 0 6 16"><circle cx="3" cy="2.4" r="1.35" fill="#575d75"/><circle cx="3" cy="8" r="1.35" fill="#575d75"/><circle cx="3" cy="13.6" r="1.35" fill="#575d75"/></svg><div style="position:absolute;left:292.5px;top:479.0px;width:5.5px;height:51.0px;background:#8080ee"></div><svg style="position:absolute;left:324px;top:490.5px" width="28" height="28" viewBox="0 0 28 28"><polygon points="14.00,2.90 17.74,9.75 25.41,11.19 20.05,16.87 21.05,24.61 14.00,21.26 6.95,24.61 7.95,16.87 2.59,11.19 10.26,9.75" fill="#ffc107" stroke="#ffc107" stroke-width="1.6" stroke-linejoin="round"/></svg><div class="t" style="left:363.60px;top:493.84px;font-size:18.5px;font-weight:400;color:#333;letter-spacing:0.435px;">Sports Media Market Campaign</div><div style="position:absolute;left:669.5px;top:490.0px;width:30px;height:30px;border-radius:50%;overflow:hidden;background:#f4f2f0"><svg width="100%" height="100%" viewBox="0 0 36 36"><path d="M1 27 Q-1 10 8 5 Q15 -1 23 2 Q34 5 34 17 Q36 28 30 33 L24 35 L12 35 L4 33Z" fill="#3a2418"/><path d="M10 36 Q11 27 18 27 Q25 27 26 36Z" fill="#d9a88c"/><ellipse cx="17.8" cy="18.5" rx="7.8" ry="9.4" fill="#e4b9a1"/><path d="M9.5 13 Q17 4.5 26.5 12 Q22 8.5 17 9.5 Q12 10.5 9.5 16Z" fill="#3a2418"/><path d="M13.3 21.3 Q17.8 25.5 22.3 21.3 Q17.8 23 13.3 21.3Z" fill="#fff" stroke="#fff" stroke-width="1.3"/></svg></div><div class="t" style="left:709.30px;top:496.04px;font-size:18.5px;font-weight:400;color:#333;letter-spacing:0.359px;">Marlow Marke...</div><div style="position:absolute;left:857px;top:498.5px;width:14px;height:14px;background:#8080ee;border-radius:50%"></div><div class="t" style="left:877.40px;top:496.04px;font-size:18.5px;font-weight:400;color:#333;letter-spacing:0.215px;">On Track</div><svg style="position:absolute;left:985.2px;top:494.5px" width="15" height="17" viewBox="0 0 15 17"><rect x="3.1" y="0" width="1.9" height="3.2" rx="0.9" fill="#1f95b5"/><rect x="9.2" y="0" width="1.9" height="3.2" rx="0.9" fill="#1f95b5"/><path d="M0.2 4.9 V3.9 Q0.2 2.5 1.6 2.5 H12.4 Q13.8 2.5 13.8 3.9 V4.9 Z" fill="#1f95b5"/><path d="M0.2 6 H13.8 V14.8 Q13.8 16.1 12.5 16.1 H1.5 Q0.2 16.1 0.2 14.8 Z" fill="#1f95b5"/><rect x="1.9500000000000002" y="8.200000000000001" width="2.5" height="2.4" rx="0.4" fill="#fff"/><rect x="1.9500000000000002" y="12.0" width="2.5" height="2.4" rx="0.4" fill="#fff"/><rect x="5.85" y="8.200000000000001" width="2.5" height="2.4" rx="0.4" fill="#fff"/><rect x="5.85" y="12.0" width="2.5" height="2.4" rx="0.4" fill="#fff"/><rect x="9.75" y="8.200000000000001" width="2.5" height="2.4" rx="0.4" fill="#fff"/><rect x="9.75" y="12.0" width="2.5" height="2.4" rx="0.4" fill="#fff"/></svg><div class="t" style="left:1005.20px;top:497.64px;font-size:18.5px;font-weight:400;color:#666;letter-spacing:-0.234px;">3/10</div><svg style="position:absolute;left:1110.2px;top:494.5px" width="15" height="17" viewBox="0 0 15 17"><rect x="3.1" y="0" width="1.9" height="3.2" rx="0.9" fill="#1f95b5"/><rect x="9.2" y="0" width="1.9" height="3.2" rx="0.9" fill="#1f95b5"/><path d="M0.2 4.9 V3.9 Q0.2 2.5 1.6 2.5 H12.4 Q13.8 2.5 13.8 3.9 V4.9 Z" fill="#1f95b5"/><path d="M0.2 6 H13.8 V14.8 Q13.8 16.1 12.5 16.1 H1.5 Q0.2 16.1 0.2 14.8 Z" fill="#1f95b5"/><rect x="1.9500000000000002" y="8.200000000000001" width="2.5" height="2.4" rx="0.4" fill="#fff"/><rect x="1.9500000000000002" y="12.0" width="2.5" height="2.4" rx="0.4" fill="#fff"/><rect x="5.85" y="8.200000000000001" width="2.5" height="2.4" rx="0.4" fill="#fff"/><rect x="5.85" y="12.0" width="2.5" height="2.4" rx="0.4" fill="#fff"/><rect x="9.75" y="8.200000000000001" width="2.5" height="2.4" rx="0.4" fill="#fff"/><rect x="9.75" y="12.0" width="2.5" height="2.4" rx="0.4" fill="#fff"/></svg><div class="t" style="left:1129.80px;top:497.64px;font-size:18.5px;font-weight:400;color:#666;letter-spacing:-0.500px;">9/17</div><svg style="position:absolute;left:1254px;top:484.5px" width="40" height="40" viewBox="0 0 40 40"><path d="M20.00,7.10 A12.9,12.9 0 0 1 31.87,25.04" fill="none" stroke="#c5b7f1" stroke-width="8.3"/><path d="M31.87,25.04 A12.9,12.9 0 0 1 25.04,31.87" fill="none" stroke="#8080ee" stroke-width="8.3"/><path d="M25.04,31.87 A12.9,12.9 0 0 1 20.00,32.90" fill="none" stroke="#449c89" stroke-width="8.3"/><path d="M20.00,32.90 A12.9,12.9 0 0 1 20.00,7.10" fill="none" stroke="#c5b7f1" stroke-width="8.3"/></svg><svg style="position:absolute;left:1334.6px;top:494.5px" width="15" height="17" viewBox="0 0 15 17"><rect x="3.1" y="0" width="1.9" height="3.2" rx="0.9" fill="#1f95b5"/><rect x="9.2" y="0" width="1.9" height="3.2" rx="0.9" fill="#1f95b5"/><path d="M0.2 4.9 V3.9 Q0.2 2.5 1.6 2.5 H12.4 Q13.8 2.5 13.8 3.9 V4.9 Z" fill="#1f95b5"/><path d="M0.2 6 H13.8 V14.8 Q13.8 16.1 12.5 16.1 H1.5 Q0.2 16.1 0.2 14.8 Z" fill="#1f95b5"/><rect x="1.9500000000000002" y="8.200000000000001" width="2.5" height="2.4" rx="0.4" fill="#fff"/><rect x="1.9500000000000002" y="12.0" width="2.5" height="2.4" rx="0.4" fill="#fff"/><rect x="5.85" y="8.200000000000001" width="2.5" height="2.4" rx="0.4" fill="#fff"/><rect x="5.85" y="12.0" width="2.5" height="2.4" rx="0.4" fill="#fff"/><rect x="9.75" y="8.200000000000001" width="2.5" height="2.4" rx="0.4" fill="#fff"/><rect x="9.75" y="12.0" width="2.5" height="2.4" rx="0.4" fill="#fff"/></svg><div class="t" style="left:1354.00px;top:497.64px;font-size:18.5px;font-weight:400;color:#666;letter-spacing:-0.019px;">April 21</div><svg style="position:absolute;left:1470px;top:498.0px" width="6" height="16" viewBox="0 0 6 16"><circle cx="3" cy="2.4" r="1.35" fill="#575d75"/><circle cx="3" cy="8" r="1.35" fill="#575d75"/><circle cx="3" cy="13.6" r="1.35" fill="#575d75"/></svg><div style="position:absolute;left:315.5px;top:537.5px;width:1211.5px;height:165.5px;background:#fff;border-radius:6px;box-shadow:0 0 0 1px #e9e9e9"></div><div style="position:absolute;left:315.5px;top:592.5px;width:1211.5px;height:1.2px;background:#e6e6e6"></div><svg style="position:absolute;left:329px;top:557.0px" width="14" height="14" viewBox="0 0 14 14"><polyline points="2.2,4.6 7,9.4 11.8,4.6" fill="none" stroke="#4a556a" stroke-width="1.5" stroke-linecap="round" stroke-linejoin="round"/></svg><div class="t" style="left:360.60px;top:555.94px;font-size:18.5px;font-weight:400;color:#333;letter-spacing:0.701px;-webkit-text-stroke:0.5px #333;">Social Media Marketing</div><div style="position:absolute;left:579.05px;top:554.0px;width:20.5px;height:20.5px;background:#d4d4d4;border-radius:50%"></div><div class="t" style="left:579.3px;top:557.8px;width:20px;text-align:center;font-size:12px;color:#333;line-height:14px;-webkit-text-stroke:0.25px #333">2</div><div style="position:absolute;left:659.5px;top:593.5px;width:1px;height:109.5px;background:#e6e6e6"></div><div style="position:absolute;left:847px;top:593.5px;width:1px;height:109.5px;background:#e6e6e6"></div><div style="position:absolute;left:975px;top:593.5px;width:1px;height:109.5px;background:#e6e6e6"></div><div style="position:absolute;left:1099.5px;top:593.5px;width:1px;height:109.5px;background:#e6e6e6"></div><div style="position:absolute;left:1224px;top:593.5px;width:1px;height:109.5px;background:#e6e6e6"></div><div style="position:absolute;left:1323.5px;top:593.5px;width:1px;height:109.5px;background:#e6e6e6"></div><div style="position:absolute;left:1447.7px;top:593.5px;width:1px;height:109.5px;background:#e6e6e6"></div><div style="position:absolute;left:1498px;top:593.5px;width:1px;height:109.5px;background:#e6e6e6"></div><div style="position:absolute;left:315.5px;top:647.5px;width:1211.5px;height:1.5px;background:#e6e6e6"></div><div style="position:absolute;left:315.5px;top:594.5px;width:5.5px;height:52px;background:#8080ee"></div><svg style="position:absolute;left:347px;top:606.5px" width="28" height="28" viewBox="0 0 28 28"><polygon points="14.00,2.90 17.74,9.75 25.41,11.19 20.05,16.87 21.05,24.61 14.00,21.26 6.95,24.61 7.95,16.87 2.59,11.19 10.26,9.75" fill="#bdbdbd" stroke="#bdbdbd" stroke-width="1.6" stroke-linejoin="round"/></svg><div class="t" style="left:386.90px;top:609.84px;font-size:18.5px;font-weight:400;color:#333;letter-spacing:0.367px;">Instagram Marketing Campai...</div><div style="position:absolute;left:669.5px;top:606.0px;width:30px;height:30px;border-radius:50%;overflow:hidden;background:#f4f2f0"><svg width="100%" height="100%" viewBox="0 0 36 36"><path d="M1 27 Q-1 10 8 5 Q15 -1 23 2 Q34 5 34 17 Q36 28 30 33 L24 35 L12 35 L4 33Z" fill="#3a2418"/><path d="M10 36 Q11 27 18 27 Q25 27 26 36Z" fill="#d9a88c"/><ellipse cx="17.8" cy="18.5" rx="7.8" ry="9.4" fill="#e4b9a1"/><path d="M9.5 13 Q17 4.5 26.5 12 Q22 8.5 17 9.5 Q12 10.5 9.5 16Z" fill="#3a2418"/><path d="M13.3 21.3 Q17.8 25.5 22.3 21.3 Q17.8 23 13.3 21.3Z" fill="#fff" stroke="#fff" stroke-width="1.3"/></svg></div><div class="t" style="left:709.30px;top:612.04px;font-size:18.5px;font-weight:400;color:#333;letter-spacing:0.359px;">Marlow Marke...</div><div style="position:absolute;left:857px;top:614.5px;width:14px;height:14px;background:#8080ee;border-radius:50%"></div><div class="t" style="left:877.40px;top:612.04px;font-size:18.5px;font-weight:400;color:#333;letter-spacing:0.215px;">On Track</div><svg style="position:absolute;left:985.2px;top:610.5px" width="15" height="17" viewBox="0 0 15 17"><rect x="3.1" y="0" width="1.9" height="3.2" rx="0.9" fill="#1f95b5"/><rect x="9.2" y="0" width="1.9" height="3.2" rx="0.9" fill="#1f95b5"/><path d="M0.2 4.9 V3.9 Q0.2 2.5 1.6 2.5 H12.4 Q13.8 2.5 13.8 3.9 V4.9 Z" fill="#1f95b5"/><path d="M0.2 6 H13.8 V14.8 Q13.8 16.1 12.5 16.1 H1.5 Q0.2 16.1 0.2 14.8 Z" fill="#1f95b5"/><rect x="1.9500000000000002" y="8.200000000000001" width="2.5" height="2.4" rx="0.4" fill="#fff"/><rect x="1.9500000000000002" y="12.0" width="2.5" height="2.4" rx="0.4" fill="#fff"/><rect x="5.85" y="8.200000000000001" width="2.5" height="2.4" rx="0.4" fill="#fff"/><rect x="5.85" y="12.0" width="2.5" height="2.4" rx="0.4" fill="#fff"/><rect x="9.75" y="8.200000000000001" width="2.5" height="2.4" rx="0.4" fill="#fff"/><rect x="9.75" y="12.0" width="2.5" height="2.4" rx="0.4" fill="#fff"/></svg><div class="t" style="left:1005.20px;top:613.64px;font-size:18.5px;font-weight:400;color:#666;letter-spacing:0.933px;">3/24</div><svg style="position:absolute;left:1254px;top:600.5px" width="40" height="40" viewBox="0 0 40 40"><circle cx="20" cy="20" r="12.9" fill="none" stroke="#c5b7f1" stroke-width="8.3"/></svg><svg style="position:absolute;left:1334.6px;top:610.5px" width="15" height="17" viewBox="0 0 15 17"><rect x="3.1" y="0" width="1.9" height="3.2" rx="0.9" fill="#1f95b5"/><rect x="9.2" y="0" width="1.9" height="3.2" rx="0.9" fill="#1f95b5"/><path d="M0.2 4.9 V3.9 Q0.2 2.5 1.6 2.5 H12.4 Q13.8 2.5 13.8 3.9 V4.9 Z" fill="#1f95b5"/><path d="M0.2 6 H13.8 V14.8 Q13.8 16.1 12.5 16.1 H1.5 Q0.2 16.1 0.2 14.8 Z" fill="#1f95b5"/><rect x="1.9500000000000002" y="8.200000000000001" width="2.5" height="2.4" rx="0.4" fill="#fff"/><rect x="1.9500000000000002" y="12.0" width="2.5" height="2.4" rx="0.4" fill="#fff"/><rect x="5.85" y="8.200000000000001" width="2.5" height="2.4" rx="0.4" fill="#fff"/><rect x="5.85" y="12.0" width="2.5" height="2.4" rx="0.4" fill="#fff"/><rect x="9.75" y="8.200000000000001" width="2.5" height="2.4" rx="0.4" fill="#fff"/><rect x="9.75" y="12.0" width="2.5" height="2.4" rx="0.4" fill="#fff"/></svg><div class="t" style="left:1354.00px;top:613.64px;font-size:18.5px;font-weight:400;color:#666;letter-spacing:-0.019px;">April 21</div><svg style="position:absolute;left:1470px;top:614.0px" width="6" height="16" viewBox="0 0 6 16"><circle cx="3" cy="2.4" r="1.35" fill="#575d75"/><circle cx="3" cy="8" r="1.35" fill="#575d75"/><circle cx="3" cy="13.6" r="1.35" fill="#575d75"/></svg><div style="position:absolute;left:315.5px;top:650.5px;width:5.5px;height:51px;background:#8080ee"></div><svg style="position:absolute;left:347px;top:662.0px" width="28" height="28" viewBox="0 0 28 28"><polygon points="14.00,2.90 17.74,9.75 25.41,11.19 20.05,16.87 21.05,24.61 14.00,21.26 6.95,24.61 7.95,16.87 2.59,11.19 10.26,9.75" fill="#bdbdbd" stroke="#bdbdbd" stroke-width="1.6" stroke-linejoin="round"/></svg><div class="t" style="left:386.90px;top:665.34px;font-size:18.5px;font-weight:400;color:#333;letter-spacing:0.471px;">TikTok Marketing Campaign</div><div style="position:absolute;left:669.5px;top:661.5px;width:30px;height:30px;border-radius:50%;overflow:hidden;background:#f4f2f0"><svg width="100%" height="100%" viewBox="0 0 36 36"><path d="M1 27 Q-1 10 8 5 Q15 -1 23 2 Q34 5 34 17 Q36 28 30 33 L24 35 L12 35 L4 33Z" fill="#3a2418"/><path d="M10 36 Q11 27 18 27 Q25 27 26 36Z" fill="#d9a88c"/><ellipse cx="17.8" cy="18.5" rx="7.8" ry="9.4" fill="#e4b9a1"/><path d="M9.5 13 Q17 4.5 26.5 12 Q22 8.5 17 9.5 Q12 10.5 9.5 16Z" fill="#3a2418"/><path d="M13.3 21.3 Q17.8 25.5 22.3 21.3 Q17.8 23 13.3 21.3Z" fill="#fff" stroke="#fff" stroke-width="1.3"/></svg></div><div class="t" style="left:709.30px;top:667.54px;font-size:18.5px;font-weight:400;color:#333;letter-spacing:0.359px;">Marlow Marke...</div><div style="position:absolute;left:857px;top:670.0px;width:14px;height:14px;background:#8080ee;border-radius:50%"></div><div class="t" style="left:877.40px;top:667.54px;font-size:18.5px;font-weight:400;color:#333;letter-spacing:0.215px;">On Track</div><svg style="position:absolute;left:985.2px;top:666.0px" width="15" height="17" viewBox="0 0 15 17"><rect x="3.1" y="0" width="1.9" height="3.2" rx="0.9" fill="#1f95b5"/><rect x="9.2" y="0" width="1.9" height="3.2" rx="0.9" fill="#1f95b5"/><path d="M0.2 4.9 V3.9 Q0.2 2.5 1.6 2.5 H12.4 Q13.8 2.5 13.8 3.9 V4.9 Z" fill="#1f95b5"/><path d="M0.2 6 H13.8 V14.8 Q13.8 16.1 12.5 16.1 H1.5 Q0.2 16.1 0.2 14.8 Z" fill="#1f95b5"/><rect x="1.9500000000000002" y="8.200000000000001" width="2.5" height="2.4" rx="0.4" fill="#fff"/><rect x="1.9500000000000002" y="12.0" width="2.5" height="2.4" rx="0.4" fill="#fff"/><rect x="5.85" y="8.200000000000001" width="2.5" height="2.4" rx="0.4" fill="#fff"/><rect x="5.85" y="12.0" width="2.5" height="2.4" rx="0.4" fill="#fff"/><rect x="9.75" y="8.200000000000001" width="2.5" height="2.4" rx="0.4" fill="#fff"/><rect x="9.75" y="12.0" width="2.5" height="2.4" rx="0.4" fill="#fff"/></svg><div class="t" style="left:1005.20px;top:669.14px;font-size:18.5px;font-weight:400;color:#666;letter-spacing:-0.667px;">3/17</div><svg style="position:absolute;left:1254px;top:656.0px" width="40" height="40" viewBox="0 0 40 40"><path d="M20.00,7.10 A12.9,12.9 0 0 1 22.24,32.70" fill="none" stroke="#c5b7f1" stroke-width="8.3"/><path d="M22.24,32.70 A12.9,12.9 0 0 1 20.00,32.90" fill="none" stroke="#8080ee" stroke-width="8.3"/><path d="M20.00,32.90 A12.9,12.9 0 0 1 20.00,7.10" fill="none" stroke="#c5b7f1" stroke-width="8.3"/></svg><svg style="position:absolute;left:1334.6px;top:666.0px" width="15" height="17" viewBox="0 0 15 17"><rect x="3.1" y="0" width="1.9" height="3.2" rx="0.9" fill="#1f95b5"/><rect x="9.2" y="0" width="1.9" height="3.2" rx="0.9" fill="#1f95b5"/><path d="M0.2 4.9 V3.9 Q0.2 2.5 1.6 2.5 H12.4 Q13.8 2.5 13.8 3.9 V4.9 Z" fill="#1f95b5"/><path d="M0.2 6 H13.8 V14.8 Q13.8 16.1 12.5 16.1 H1.5 Q0.2 16.1 0.2 14.8 Z" fill="#1f95b5"/><rect x="1.9500000000000002" y="8.200000000000001" width="2.5" height="2.4" rx="0.4" fill="#fff"/><rect x="1.9500000000000002" y="12.0" width="2.5" height="2.4" rx="0.4" fill="#fff"/><rect x="5.85" y="8.200000000000001" width="2.5" height="2.4" rx="0.4" fill="#fff"/><rect x="5.85" y="12.0" width="2.5" height="2.4" rx="0.4" fill="#fff"/><rect x="9.75" y="8.200000000000001" width="2.5" height="2.4" rx="0.4" fill="#fff"/><rect x="9.75" y="12.0" width="2.5" height="2.4" rx="0.4" fill="#fff"/></svg><div class="t" style="left:1354.00px;top:669.14px;font-size:18.5px;font-weight:400;color:#666;letter-spacing:-0.019px;">April 21</div><svg style="position:absolute;left:1470px;top:669.5px" width="6" height="16" viewBox="0 0 6 16"><circle cx="3" cy="2.4" r="1.35" fill="#575d75"/><circle cx="3" cy="8" r="1.35" fill="#575d75"/><circle cx="3" cy="13.6" r="1.35" fill="#575d75"/></svg><div style="position:absolute;left:292.5px;top:723.5px;width:1234.5px;height:177.0px;background:#fff;border-radius:6px;box-shadow:0 0 0 1px #e9e9e9"></div><div style="position:absolute;left:292.5px;top:789px;width:1234.5px;height:1.2px;background:#e6e6e6"></div><svg style="position:absolute;left:332.5px;top:748.25px" width="14" height="14" viewBox="0 0 14 14"><polyline points="2.2,4.6 7,9.4 11.8,4.6" fill="none" stroke="#4a556a" stroke-width="1.5" stroke-linecap="round" stroke-linejoin="round"/></svg><div class="t" style="left:363.60px;top:747.19px;font-size:18.5px;font-weight:400;color:#333;letter-spacing:0.787px;-webkit-text-stroke:0.5px #333;">Recruitment</div><div style="position:absolute;left:483.05px;top:745.25px;width:20.5px;height:20.5px;background:#d4d4d4;border-radius:50%"></div><div class="t" style="left:483.3px;top:749.05px;width:20px;text-align:center;font-size:12px;color:#333;line-height:14px;-webkit-text-stroke:0.25px #333">2</div><div style="position:absolute;left:659.5px;top:790px;width:1px;height:110.5px;background:#e6e6e6"></div><div style="position:absolute;left:847px;top:790px;width:1px;height:110.5px;background:#e6e6e6"></div><div style="position:absolute;left:975px;top:790px;width:1px;height:110.5px;background:#e6e6e6"></div><div style="position:absolute;left:1099.5px;top:790px;width:1px;height:110.5px;background:#e6e6e6"></div><div style="position:absolute;left:1224px;top:790px;width:1px;height:110.5px;background:#e6e6e6"></div><div style="position:absolute;left:1323.5px;top:790px;width:1px;height:110.5px;background:#e6e6e6"></div><div style="position:absolute;left:1447.7px;top:790px;width:1px;height:110.5px;background:#e6e6e6"></div><div style="position:absolute;left:1498px;top:790px;width:1px;height:110.5px;background:#e6e6e6"></div><div style="position:absolute;left:292.5px;top:844.5px;width:1234.5px;height:1.5px;background:#e6e6e6"></div><div style="position:absolute;left:292.5px;top:791.0px;width:5.5px;height:52.0px;background:#8080ee"></div><svg style="position:absolute;left:324px;top:803.0px" width="28" height="28" viewBox="0 0 28 28"><polygon points="14.00,2.90 17.74,9.75 25.41,11.19 20.05,16.87 21.05,24.61 14.00,21.26 6.95,24.61 7.95,16.87 2.59,11.19 10.26,9.75" fill="#bdbdbd" stroke="#bdbdbd" stroke-width="1.6" stroke-linejoin="round"/></svg><div class="t" style="left:363.60px;top:806.34px;font-size:18.5px;font-weight:400;color:#333;letter-spacing:0.366px;">Recruit training team</div><div style="position:absolute;left:669.5px;top:802.5px;width:30px;height:30px;border-radius:50%;overflow:hidden;background:#9fc0d4"><svg width="100%" height="100%" viewBox="0 0 36 36"><rect x="0" y="22" width="36" height="14" fill="#5a7f93"/><path d="M5 34 Q3 8 17 6 Q28 6 27 22 L27 30 Z" fill="#3e2820"/><path d="M6 36 Q8 28 18 27 Q28 28 30 36Z" fill="#2e4553"/><ellipse cx="19" cy="17" rx="6.5" ry="8" fill="#c9a278"/><path d="M11 14 Q14 7 20 7 Q26 8 26 14 Q22 10 17 11 Q13 12 11 18Z" fill="#3e2820"/></svg></div><div class="t" style="left:709.30px;top:808.54px;font-size:18.5px;font-weight:400;color:#333;letter-spacing:0.178px;">Joanne Recru...</div><div style="position:absolute;left:857px;top:811.0px;width:14px;height:14px;background:#8080ee;border-radius:50%"></div><div class="t" style="left:877.40px;top:808.54px;font-size:18.5px;font-weight:400;color:#333;letter-spacing:0.215px;">On Track</div><svg style="position:absolute;left:1254px;top:797.0px" width="40" height="40" viewBox="0 0 40 40"><path d="M20.00,7.10 A12.9,12.9 0 0 1 31.69,25.45" fill="none" stroke="#9db600" stroke-width="8.3"/><path d="M31.69,25.45 A12.9,12.9 0 0 1 20.00,32.90" fill="none" stroke="#484848" stroke-width="8.3"/><path d="M20.00,32.90 A12.9,12.9 0 0 1 8.31,25.45" fill="none" stroke="#8080ee" stroke-width="8.3"/><path d="M8.31,25.45 A12.9,12.9 0 0 1 20.00,7.10" fill="none" stroke="#9db600" stroke-width="8.3"/></svg><svg style="position:absolute;left:1334.6px;top:807.0px" width="15" height="17" viewBox="0 0 15 17"><rect x="3.1" y="0" width="1.9" height="3.2" rx="0.9" fill="#1f95b5"/><rect x="9.2" y="0" width="1.9" height="3.2" rx="0.9" fill="#1f95b5"/><path d="M0.2 4.9 V3.9 Q0.2 2.5 1.6 2.5 H12.4 Q13.8 2.5 13.8 3.9 V4.9 Z" fill="#1f95b5"/><path d="M0.2 6 H13.8 V14.8 Q13.8 16.1 12.5 16.1 H1.5 Q0.2 16.1 0.2 14.8 Z" fill="#1f95b5"/><rect x="1.9500000000000002" y="8.200000000000001" width="2.5" height="2.4" rx="0.4" fill="#fff"/><rect x="1.9500000000000002" y="12.0" width="2.5" height="2.4" rx="0.4" fill="#fff"/><rect x="5.85" y="8.200000000000001" width="2.5" height="2.4" rx="0.4" fill="#fff"/><rect x="5.85" y="12.0" width="2.5" height="2.4" rx="0.4" fill="#fff"/><rect x="9.75" y="8.200000000000001" width="2.5" height="2.4" rx="0.4" fill="#fff"/><rect x="9.75" y="12.0" width="2.5" height="2.4" rx="0.4" fill="#fff"/></svg><div class="t" style="left:1354.00px;top:810.14px;font-size:18.5px;font-weight:400;color:#666;letter-spacing:-0.019px;">April 21</div><svg style="position:absolute;left:1470px;top:810.5px" width="6" height="16" viewBox="0 0 6 16"><circle cx="3" cy="2.4" r="1.35" fill="#575d75"/><circle cx="3" cy="8" r="1.35" fill="#575d75"/><circle cx="3" cy="13.6" r="1.35" fill="#575d75"/></svg><div style="position:absolute;left:292.5px;top:847.0px;width:5.5px;height:52.0px;background:#8080ee"></div><svg style="position:absolute;left:324px;top:859.0px" width="28" height="28" viewBox="0 0 28 28"><polygon points="14.00,2.90 17.74,9.75 25.41,11.19 20.05,16.87 21.05,24.61 14.00,21.26 6.95,24.61 7.95,16.87 2.59,11.19 10.26,9.75" fill="#bdbdbd" stroke="#bdbdbd" stroke-width="1.6" stroke-linejoin="round"/></svg><div class="t" style="left:363.60px;top:862.34px;font-size:18.5px;font-weight:400;color:#333;letter-spacing:0.331px;">Recruiting sales team</div><div style="position:absolute;left:669.5px;top:858.5px;width:30px;height:30px;border-radius:50%;overflow:hidden;background:#e8eaea"><svg width="100%" height="100%" viewBox="0 0 36 36"><path d="M3 36 Q5 25 18 24 Q31 25 33 36Z" fill="#1f2f55"/><path d="M14 21 L22 21 L21 26 L15 26Z" fill="#c9967a"/><ellipse cx="18" cy="14" rx="6" ry="8" fill="#dcb094"/><path d="M12.5 16 Q18 25 23.5 16 L23 19 Q18 24 13 19Z" fill="#6e4e3c"/></svg></div><div class="t" style="left:709.30px;top:864.54px;font-size:18.5px;font-weight:400;color:#333;letter-spacing:0.106px;">Lloyd Sales</div><div style="position:absolute;left:857px;top:867.0px;width:14px;height:14px;background:#8080ee;border-radius:50%"></div><div class="t" style="left:877.40px;top:864.54px;font-size:18.5px;font-weight:400;color:#333;letter-spacing:0.215px;">On Track</div><svg style="position:absolute;left:1254px;top:853.0px" width="40" height="40" viewBox="0 0 40 40"><path d="M20.00,7.10 A12.9,12.9 0 0 1 30.57,12.60" fill="none" stroke="#9db600" stroke-width="8.3"/><path d="M30.57,12.60 A12.9,12.9 0 0 1 31.17,26.45" fill="none" stroke="#f0d900" stroke-width="8.3"/><path d="M31.17,26.45 A12.9,12.9 0 0 1 20.00,32.90" fill="none" stroke="#484848" stroke-width="8.3"/><path d="M20.00,32.90 A12.9,12.9 0 0 1 8.83,13.55" fill="none" stroke="#8080ee" stroke-width="8.3"/><path d="M8.83,13.55 A12.9,12.9 0 0 1 20.00,7.10" fill="none" stroke="#9db600" stroke-width="8.3"/></svg><svg style="position:absolute;left:1334.6px;top:863.0px" width="15" height="17" viewBox="0 0 15 17"><rect x="3.1" y="0" width="1.9" height="3.2" rx="0.9" fill="#1f95b5"/><rect x="9.2" y="0" width="1.9" height="3.2" rx="0.9" fill="#1f95b5"/><path d="M0.2 4.9 V3.9 Q0.2 2.5 1.6 2.5 H12.4 Q13.8 2.5 13.8 3.9 V4.9 Z" fill="#1f95b5"/><path d="M0.2 6 H13.8 V14.8 Q13.8 16.1 12.5 16.1 H1.5 Q0.2 16.1 0.2 14.8 Z" fill="#1f95b5"/><rect x="1.9500000000000002" y="8.200000000000001" width="2.5" height="2.4" rx="0.4" fill="#fff"/><rect x="1.9500000000000002" y="12.0" width="2.5" height="2.4" rx="0.4" fill="#fff"/><rect x="5.85" y="8.200000000000001" width="2.5" height="2.4" rx="0.4" fill="#fff"/><rect x="5.85" y="12.0" width="2.5" height="2.4" rx="0.4" fill="#fff"/><rect x="9.75" y="8.200000000000001" width="2.5" height="2.4" rx="0.4" fill="#fff"/><rect x="9.75" y="12.0" width="2.5" height="2.4" rx="0.4" fill="#fff"/></svg><div class="t" style="left:1354.00px;top:866.14px;font-size:18.5px;font-weight:400;color:#666;letter-spacing:-0.019px;">April 21</div><svg style="position:absolute;left:1470px;top:866.5px" width="6" height="16" viewBox="0 0 6 16"><circle cx="3" cy="2.4" r="1.35" fill="#575d75"/><circle cx="3" cy="8" r="1.35" fill="#575d75"/><circle cx="3" cy="13.6" r="1.35" fill="#575d75"/></svg><div style="position:absolute;left:390px;top:46.5px;width:469px;height:106.5px;background:#fff;box-shadow:0 3px 10px rgba(0,0,0,0.28);border-radius:2px"></div><svg style="position:absolute;left:411px;top:64px" width="24" height="24" viewBox="0 0 24 24"><path d="M12 1.5 L19 9 H15 V14.5 H9 V9 H5 Z" fill="#8a7cf0"/><path d="M1.5 15.5 H7.5 V17 H16.5 V15.5 H22.5 V20.5 Q22.5 22.5 20.5 22.5 H3.5 Q1.5 22.5 1.5 20.5 Z" fill="#8a7cf0"/><circle cx="17" cy="19.5" r="0.9" fill="#fff"/><circle cx="19.8" cy="19.5" r="0.9" fill="#fff"/></svg><div class="t" style="left:449.50px;top:66.64px;font-size:18.5px;font-weight:400;color:#333;letter-spacing:0.465px;">Update Project Information from Spreadsheet</div><div style="position:absolute;left:391px;top:96.5px;width:468px;height:56.5px;box-sizing:border-box;border:5.5px solid #fdc300;background:#fff"></div><svg style="position:absolute;left:412px;top:113px" width="17" height="21" viewBox="0 0 17 21"><path d="M1 1 H10.4 V6.6 H16 V20 H1 Z" fill="#2a9bbc"/><path d="M11.7 1 L16 5.3 H11.7 Z" fill="#2a9bbc"/><path d="M5 15.5 Q5.5 11.5 10 11.5 V9.5 L13 12.5 L10 15.5 V13.5 Q7 13.5 5 15.5 Z" fill="#fff"/></svg><div class="t" style="left:449.50px;top:114.54px;font-size:18.5px;font-weight:400;color:#333;letter-spacing:0.443px;">Export Project Information to Spreadsheet</div><div style="position:absolute;left:1527px;top:0px;width:73px;height:914px;background:#fff"></div><div style="position:absolute;left:1527px;top:0px;width:1.2px;height:914px;background:#e4e4e4"></div><div style="position:absolute;left:1528px;top:55px;width:72px;height:1.2px;background:#e4e4e4"></div><div style="position:absolute;left:1528px;top:99px;width:72px;height:1.2px;background:#e4e4e4"></div><div style="position:absolute;left:1545.0px;top:8.0px;width:38px;height:38px;border-radius:50%;overflow:hidden;background:#f4f2f0"><svg width="100%" height="100%" viewBox="0 0 36 36"><path d="M1 27 Q-1 10 8 5 Q15 -1 23 2 Q34 5 34 17 Q36 28 30 33 L24 35 L12 35 L4 33Z" fill="#3a2418"/><path d="M10 36 Q11 27 18 27 Q25 27 26 36Z" fill="#d9a88c"/><ellipse cx="17.8" cy="18.5" rx="7.8" ry="9.4" fill="#e4b9a1"/><path d="M9.5 13 Q17 4.5 26.5 12 Q22 8.5 17 9.5 Q12 10.5 9.5 16Z" fill="#3a2418"/><path d="M13.3 21.3 Q17.8 25.5 22.3 21.3 Q17.8 23 13.3 21.3Z" fill="#fff" stroke="#fff" stroke-width="1.3"/></svg></div><div style="position:absolute;left:1566.5px;top:7.5px;width:20px;height:20px;background:#e0775f;border-radius:50%;box-shadow:0 0 0 1px #fff"></div><div class="t" style="left:1566.5px;top:10px;width:20px;text-align:center;font-size:12.5px;color:#fff;line-height:15px;letter-spacing:0.5px">34</div><div style="position:absolute;left:1571.5px;top:33.5px;width:12.5px;height:12.5px;background:#3c9a86;border-radius:50%;box-shadow:0 0 0 1.5px #fff"></div><svg style="position:absolute;left:1554px;top:60px" width="20" height="17" viewBox="0 0 20 17"><path d="M1 7 Q1 2 7 2 Q13 2 13 7 Q13 11.5 7 11.5 Q6 11.5 5 11.2 L1.5 13 L2.5 10 Q1 8.8 1 7Z" fill="#2a9bbc"/><path d="M9 12.6 Q14 12.6 14.8 8.3 Q19 9.3 19 12 Q19 13.5 17.8 14.5 L18.7 16.8 L15.5 15.5 Q14.5 15.8 13.5 15.8 Q10.5 15.8 9 12.6Z" fill="#2a9bbc"/></svg><div class="t" style="left:1542.70px;top:81.02px;font-size:19px;font-weight:400;color:#333;letter-spacing:0.791px;-webkit-text-stroke:0.3px #333;">Chat</div><div style="position:absolute;left:1545.5px;top:113.30000000000001px;width:37px;height:37px;border-radius:50%;overflow:hidden;background:#c9b6a8"><svg width="100%" height="100%" viewBox="0 0 36 36"><rect x="0" y="0" width="36" height="36" fill="#e8eef2"/><rect x="0" y="6" width="36" height="16" fill="#9c6a5c"/><rect x="0" y="6" width="12" height="5" fill="#3a3f3c"/><rect x="0" y="18" width="36" height="5" fill="#6a6e62"/><rect x="0" y="22" width="36" height="14" fill="#8dc63f"/><path d="M4 36 Q6 26 18 25 Q30 26 32 36Z" fill="#b4c9e2"/><path d="M15 22 L21 22 L20 28 L16 28Z" fill="#a87a60"/><ellipse cx="18" cy="15" rx="6" ry="8" fill="#b8876a"/><path d="M11.5 12 Q12 5 18 5 Q24 5 24.5 12 Q23 8 18 8 Q13 8 11.5 12Z" fill="#1e1a18"/><path d="M12.5 17 Q18 26 23.5 17 L23 20 Q18 25 13 20Z" fill="#5a4034"/></svg></div><div style="position:absolute;left:1545.5px;top:167.5px;width:37px;height:37px;border-radius:50%;overflow:hidden;background:#ffffff"><svg width="100%" height="100%" viewBox="0 0 36 36"><path d="M2 33 Q4 25 18 24.5 Q32 25 34 33 Q28 37 18 37 Q8 37 2 33Z" fill="#6b2a3c"/><path d="M14.5 20 L21.5 20 L21 26 L15 26Z" fill="#d9a88c"/><ellipse cx="18" cy="15" rx="7" ry="8.6" fill="#e6bba0"/><path d="M10.5 15 Q8.5 2.5 18 2.5 Q27.5 2.5 25.5 15 Q24.5 7.5 18 8 Q12 7.5 10.5 15Z" fill="#33241c"/><path d="M12 18 Q18 26 24 18 L24 20 Q18 25 12 20Z" fill="#b58a70"/></svg></div><div style="position:absolute;left:1545.5px;top:222.0px;width:37px;height:37px;border-radius:50%;overflow:hidden;background:#eaf0f7"><svg width="100%" height="100%" viewBox="0 0 36 36"><path d="M0 20 L0 36 L14 36 Z" fill="#3b4fae"/><path d="M8 36 Q10 28 20 27 Q32 28 34 36Z" fill="#dca47e"/><ellipse cx="16" cy="18.5" rx="8.5" ry="10" fill="#c48a66"/><path d="M4 22 Q2 4 16 3 Q29 3 29 15 L26.5 21 Q25 10.5 16 10.5 Q8 11 6.5 23Z" fill="#1d1b1b"/><path d="M8.5 24 Q16 33 23.5 24 L23 21.5 Q16 27 9 21.5Z" fill="#3a2a22"/><path d="M8 16.5 H24" stroke="#6a5a50" stroke-width="0.8"/></svg></div><div style="position:absolute;left:1545.5px;top:275.8px;width:37px;height:37px;border-radius:50%;overflow:hidden;background:#cfcfcf"><svg width="100%" height="100%" viewBox="0 0 36 36"><path d="M4 36 Q6 30 18 29 Q30 30 32 36Z" fill="#3a3e44"/><ellipse cx="18" cy="18" rx="9" ry="11" fill="#dd9a8c"/><path d="M9 14 Q9 6 18 6 Q27 6 27 14 Q24 9 18 9 Q12 9 9 14Z" fill="#c9a89a"/><path d="M8 16 H28" stroke="#8a8a8a" stroke-width="0.8"/></svg></div><div style="position:absolute;left:1545.5px;top:329.7px;width:37px;height:37px;background:#2a9bbc;border-radius:50%"></div><div class="t" style="left:1545.5px;top:338.2px;width:37px;text-align:center;font-size:19px;color:#fff;line-height:20px;font-weight:700;letter-spacing:0.3px">AU</div><div style="position:absolute;left:1545.5px;top:384.0px;width:37px;height:37px;border-radius:50%;overflow:hidden;background:#eaf0f7"><svg width="100%" height="100%" viewBox="0 0 36 36"><path d="M0 20 L0 36 L14 36 Z" fill="#3b4fae"/><path d="M8 36 Q10 28 20 27 Q32 28 34 36Z" fill="#dca47e"/><ellipse cx="16" cy="18.5" rx="8.5" ry="10" fill="#c48a66"/><path d="M4 22 Q2 4 16 3 Q29 3 29 15 L26.5 21 Q25 10.5 16 10.5 Q8 11 6.5 23Z" fill="#1d1b1b"/><path d="M8.5 24 Q16 33 23.5 24 L23 21.5 Q16 27 9 21.5Z" fill="#3a2a22"/><path d="M8 16.5 H24" stroke="#6a5a50" stroke-width="0.8"/></svg></div><div style="position:absolute;left:1545.5px;top:440.7px;width:37px;height:37px;border-radius:50%;overflow:hidden;background:#4d4d4d"><svg width="100%" height="100%" viewBox="0 0 36 36"><rect x="0" y="0" width="36" height="12" fill="#6b6b6b"/><path d="M6 34 Q3 8 17 6 Q29 6 30 20 L32 34Z" fill="#5c3224"/><ellipse cx="19" cy="18" rx="6.5" ry="8" fill="#e6ab98"/><path d="M12 14 Q15 8 22 9 Q26 11 26 16 Q22 11 17 12 Q13 13 12 18Z" fill="#5c3224"/></svg></div><div style="position:absolute;left:1545.5px;top:495.79999999999995px;width:37px;height:37px;border-radius:50%;overflow:hidden;background:#d6d6d6"><svg width="100%" height="100%" viewBox="0 0 36 36"><path d="M4 36 L6 24 Q10 18 16 20 L28 20 Q32 24 32 36Z" fill="#8c8a84"/><path d="M20 22 L26 22 L25 36 L19 36Z" fill="#b9b9c6"/><path d="M6 22 Q12 12 20 14" stroke="#8c8a84" stroke-width="3" fill="none"/><ellipse cx="23" cy="13" rx="4.5" ry="6" fill="#d9a888"/><path d="M18.5 11 Q18.5 5 23 5 Q28 5 27.5 11 Q25 8 23 8 Q20 8 18.5 11Z" fill="#b0784e"/></svg></div><div style="position:absolute;left:1545.5px;top:550.3px;width:37px;height:37px;border-radius:50%;overflow:hidden;background:#e0d6da"><svg width="100%" height="100%" viewBox="0 0 36 36"><path d="M7 30 Q5 8 18 7 Q31 8 29 30Z" fill="#6b4a2e"/><path d="M5 36 Q7 29 18 28 Q29 29 31 36Z" fill="#3d4f66"/><path d="M14 24 L22 24 L21 29 L15 29Z" fill="#e0b49e"/><ellipse cx="18" cy="18" rx="6.5" ry="8" fill="#e8bca6"/><path d="M11 16 Q12 9 18 9 Q24 9 25 16 Q22 12 18 12 Q14 12 11 16Z" fill="#6b4a2e"/></svg></div><div style="position:absolute;left:1545.5px;top:604.9px;width:37px;height:37px;border-radius:50%;overflow:hidden;background:#f1f1ec"><svg width="100%" height="100%" viewBox="0 0 36 36"><path d="M6 36 Q8 29 18 28 Q28 29 30 36Z" fill="#f8f8f8"/><path d="M9 24 Q6 6 18 5 Q30 6 27 22 L25 24Z" fill="#1a1818"/><ellipse cx="17" cy="19" rx="6" ry="7.5" fill="#eccab6"/><path d="M10 18 Q12 10 19 10 Q24 11 25 15 Q20 11 14 14Z" fill="#1a1818"/></svg></div><div style="position:absolute;left:1545.5px;top:660.5px;width:37px;height:37px;border-radius:50%;overflow:hidden;background:#f2f2f2"><svg width="100%" height="100%" viewBox="0 0 36 36"><path d="M2 36 Q4 27 14 26 Q26 26 30 36Z" fill="#1a1a1a"/><path d="M4 26 Q2 6 16 5 Q24 5 26 10 L14 14 L10 26Z" fill="#1e1e1e"/><ellipse cx="19" cy="18" rx="8" ry="9.5" fill="#bcbcbc"/><path d="M12 16 H29" stroke="#222" stroke-width="1.3"/><path d="M14 23 Q19 30 26 22 L25 26 Q19 30 14 26Z" fill="#333"/></svg></div><div style="position:absolute;left:1545.5px;top:715.0px;width:37px;height:37px;border-radius:50%;overflow:hidden;background:#ffffff"><svg width="100%" height="100%" viewBox="0 0 36 36"><circle cx="18" cy="18" r="16.2" fill="#cdb89a"/><path d="M5 28 Q4 8 16 6 Q28 6 28 16 L26 24 L14 30Z" fill="#4a3c30"/><path d="M6 30 Q10 28 18 30 L18 36 L6 36Z" fill="#222"/><ellipse cx="21" cy="18" rx="6" ry="8" fill="#b07a58"/><circle cx="18" cy="18" r="16.5" fill="none" stroke="#9c54c4" stroke-width="3"/></svg></div><div style="position:absolute;left:1545.5px;top:770.5px;width:37px;height:37px;border-radius:50%;overflow:hidden;background:#9fc0d4"><svg width="100%" height="100%" viewBox="0 0 36 36"><rect x="0" y="22" width="36" height="14" fill="#5a7f93"/><path d="M5 34 Q3 8 17 6 Q28 6 27 22 L27 30 Z" fill="#3e2820"/><path d="M6 36 Q8 28 18 27 Q28 28 30 36Z" fill="#2e4553"/><ellipse cx="19" cy="17" rx="6.5" ry="8" fill="#c9a278"/><path d="M11 14 Q14 7 20 7 Q26 8 26 14 Q22 10 17 11 Q13 12 11 18Z" fill="#3e2820"/></svg></div><div style="position:absolute;left:1545.5px;top:825.1px;width:37px;height:37px;border-radius:50%;overflow:hidden;background:#e8eaea"><svg width="100%" height="100%" viewBox="0 0 36 36"><path d="M3 36 Q5 25 18 24 Q31 25 33 36Z" fill="#1f2f55"/><path d="M14 21 L22 21 L21 26 L15 26Z" fill="#c9967a"/><ellipse cx="18" cy="14" rx="6" ry="8" fill="#dcb094"/><path d="M12.5 16 Q18 25 23.5 16 L23 19 Q18 24 13 19Z" fill="#6e4e3c"/></svg></div><div style="position:absolute;left:1545.5px;top:880.2px;width:37px;height:37px;border-radius:50%;overflow:hidden;background:#ffffff"><svg width="100%" height="100%" viewBox="0 0 36 36"><circle cx="18" cy="18" r="16.2" fill="#f0f0f0"/><path d="M4 36 Q6 28 18 27 Q30 28 32 36Z" fill="#1a1a1a"/><ellipse cx="18" cy="16" rx="7" ry="9" fill="#8e5c42"/><path d="M13 20 Q18 25 23 20" stroke="#fff" stroke-width="1.8" fill="none"/><circle cx="18" cy="18" r="16.5" fill="none" stroke="#9c54c4" stroke-width="3"/></svg></div>
</body></html>
